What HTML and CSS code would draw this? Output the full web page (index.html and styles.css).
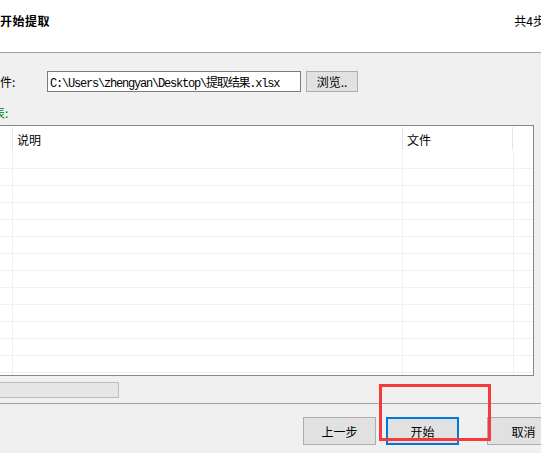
FILE: index.html
```html
<!DOCTYPE html>
<html lang="zh-CN">
<head>
  <meta charset="UTF-8" />
  <meta name="viewport" content="width=device-width, initial-scale=1.0" />
  <title>开始提取</title>
  <link rel="stylesheet" href="styles.css">
</head>
<body>
  <div class="header">
    <div class="title">开始提取</div>
    <div class="steps">共4步</div>
  </div>

  <div class="main">
    <div class="file-row">
      <label for="outfile">文件:</label>
      <input type="text" id="outfile" class="path" value="C:\Users\zhengyan\Desktop\提取结果.xlsx" />
      <button class="btn browse">浏览..</button>
    </div>

    <div class="list-label">文件列表:</div>

    <div class="list">
      <div class="list-head">
        <div class="col c1"></div>
        <div class="col c2">说明</div>
        <div class="col c3">文件</div>
        <div class="col c4"></div>
      </div>
      <div class="list-body"></div>
    </div>

    <div class="progress"></div>
  </div>

  <div class="footer">
    <button class="btn">上一步</button>
    <button class="btn primary">开始</button>
    <button class="btn">取消</button>
  </div>

  <!-- highlight box drawn over the start button -->
  <div class="mark"></div>
</body>
</html>
```

FILE: styles.css
```css
body {
  margin: 0;
  width: 541px;
  height: 453px;
  overflow: hidden;
  position: relative;
  background: #f0f0f0;
  font-family: "Noto Sans CJK SC", "Liberation Sans", sans-serif;
  font-size: 12px;
  color: #000;
}
.header {
  height: 53px;
  background: #fff;
  border-bottom: 1px solid #a0a0a0;
  display: flex;
  justify-content: space-between;
  align-items: flex-start;
  padding-top: 12px;
  box-sizing: border-box;
}
.title {
  font-weight: bold;
  letter-spacing: 0.5px;
  line-height: 18px;
}
.steps {
  line-height: 18px;
  margin-right: -4px;
}
.file-row {
  display: flex;
  align-items: center;
  margin: 18px 0 0 -12px;
  height: 21px;
}
.file-row label {
  width: 59px;
}
.path {
  width: 254px;
  height: 21px;
  box-sizing: border-box;
  border: 1px solid #7a7a7a;
  padding: 0 2px;
  margin: 0;
  font-family: "Liberation Mono", "Noto Sans CJK SC", monospace;
  font-size: 12px;
  letter-spacing: -1.2px;
  background: #fff;
  color: #000;
  outline: none;
}
.btn {
  flex-shrink: 0;
  height: 28px;
  width: 73px;
  border: 1px solid #adadad;
  background: #e1e1e1;
  font-family: "Noto Sans CJK SC", "Liberation Sans", sans-serif;
  font-size: 12px;
  color: #000;
  padding: 0;
  margin: 0;
  box-sizing: border-box;
}
.browse {
  width: 52px;
  height: 21px;
  margin-left: 5px;
}
.list-label {
  color: #008000;
  margin: 13px 0 0 -43px;
  line-height: 16px;
}
.list {
  margin: 4px 0 0 -20px;
  width: 554px;
  height: 251px;
  border: 1px solid #828790;
  box-sizing: border-box;
  background: #fff;
}
.list-head {
  display: flex;
  height: 25px;
}
.col {
  box-sizing: border-box;
  border-right: 1px solid #e5e5e5;
  padding: 5px 0 0 4px;
  line-height: 16px;
  margin: 1px 0;
}
.c1 { width: 32px; }
.c2 { width: 390px; }
.c3 { width: 110px; }
.c4 { width: 20px; border-right: none; }
.list-body {
  height: 224px;
  background-image:
    linear-gradient(#f0f0f0, #f0f0f0),
    linear-gradient(#f0f0f0, #f0f0f0),
    linear-gradient(#f0f0f0, #f0f0f0),
    repeating-linear-gradient(to bottom, transparent 0, transparent 16px, #f0f0f0 16px, #f0f0f0 17px);
  background-size: 1px 100%, 1px 100%, 1px 100%, 100% 100%;
  background-position: 31px 0, 421px 0, 532px 0, 0 1px;
  background-repeat: no-repeat, no-repeat, no-repeat, repeat;
}
.progress {
  margin: 6px 0 0 -20px;
  width: 139px;
  height: 16px;
  border: 1px solid #bcbcbc;
  background: #e6e6e6;
  box-sizing: border-box;
}
.footer {
  margin-top: 5px;
  border-top: 1px solid #a0a0a0;
  display: flex;
  padding: 13px 0 0 303px;
  gap: 10px;
}
.footer .primary {
  border: 2px solid #0078d7;
  margin-right: 18px;
}
.mark {
  position: absolute;
  left: 379px;
  top: 384px;
  width: 112px;
  height: 57px;
  border: 3px solid #f53a3a;
  box-sizing: border-box;
}
```
